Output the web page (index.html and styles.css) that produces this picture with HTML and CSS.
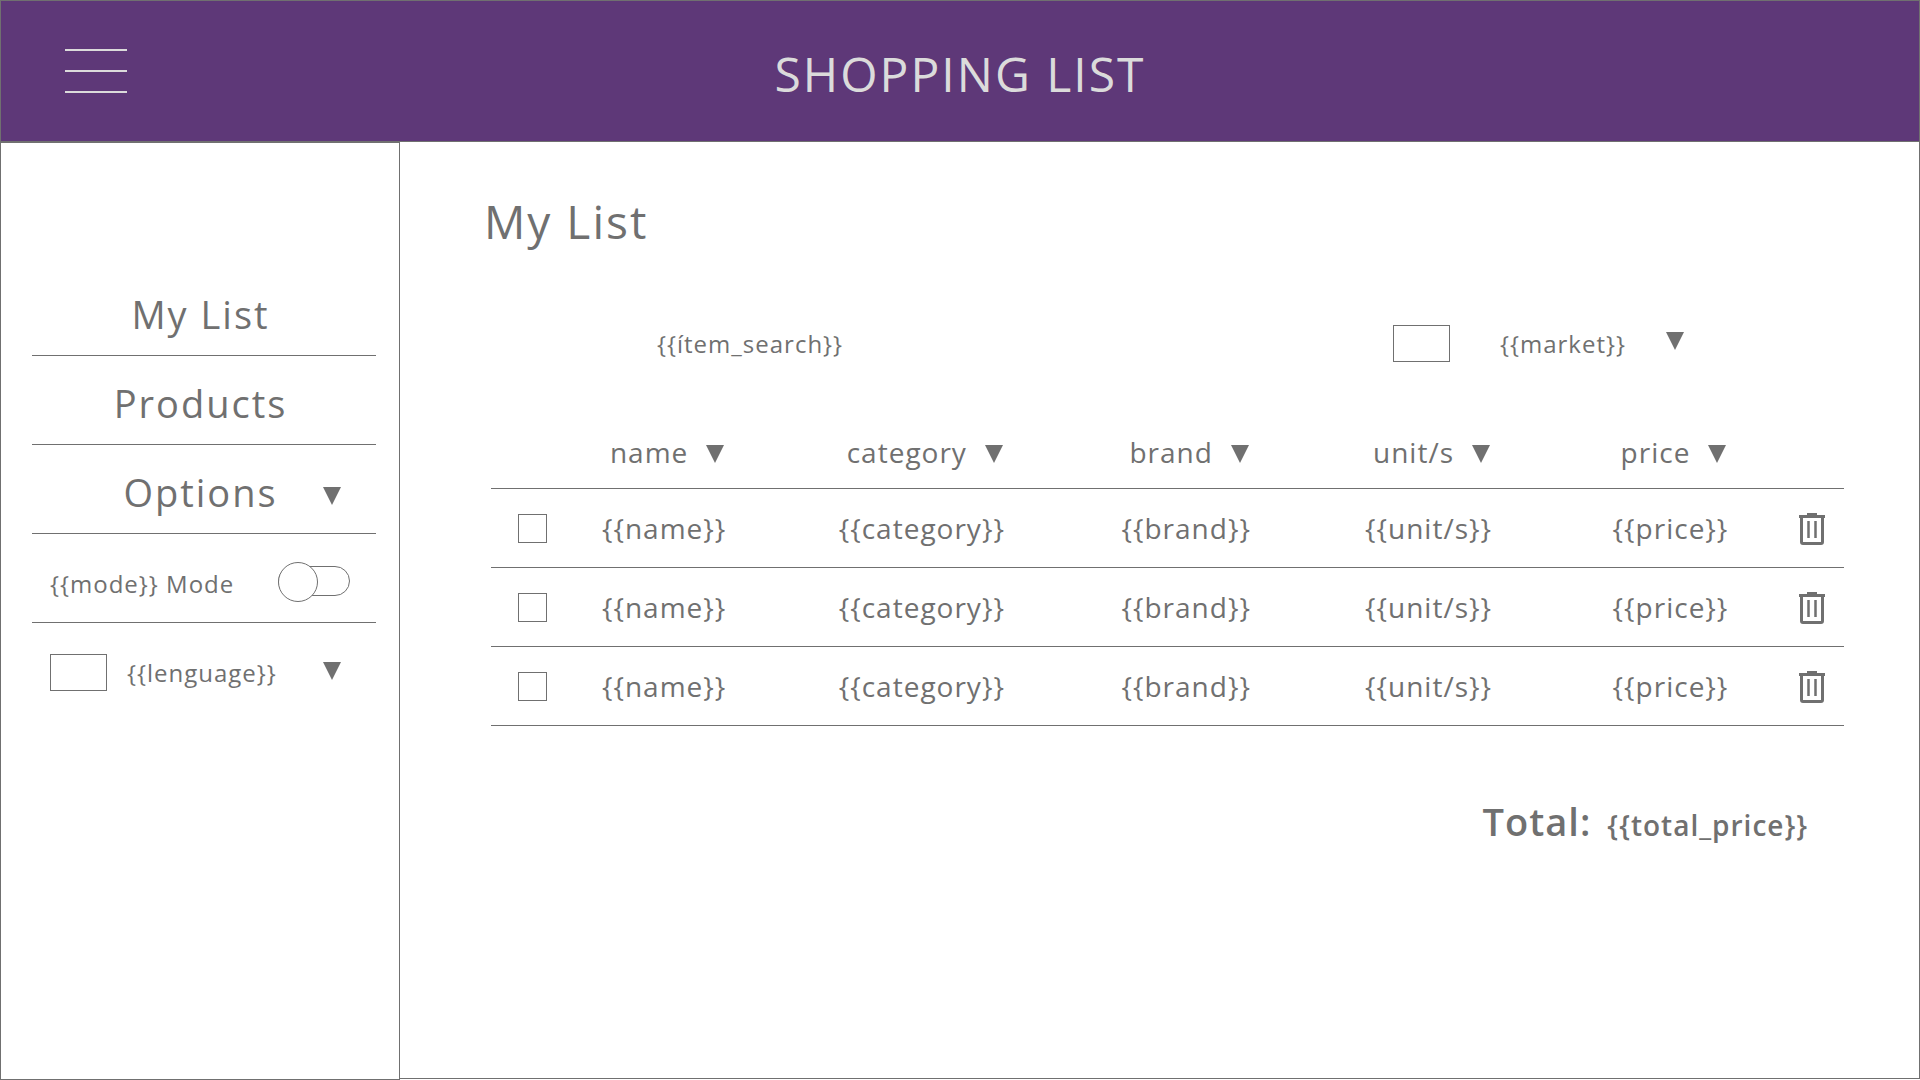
FILE: index.html
```html
<!DOCTYPE html>
<html lang="en">
<head>
  <meta charset="utf-8">
  <meta name="viewport" content="width=device-width, initial-scale=1">
  <title>Shopping List</title>
  <link rel="stylesheet" href="styles.css">
</head>
<body>
  <svg class="sprite" aria-hidden="true">
    <symbol id="arrow" viewBox="0 0 18 18"><path d="M0 0H18L9 18Z" fill="currentColor"/></symbol>
    <symbol id="trash" viewBox="0 0 28 32">
      <path d="M9 1.5H19" stroke="currentColor" stroke-width="3"/>
      <path d="M1 3.5H27" stroke="currentColor" stroke-width="3"/>
      <path d="M3.500 4V29Q3.500 30.500 5 30.500H23Q24.500 30.500 24.500 29V4" fill="none" stroke="currentColor" stroke-width="3"/>
      <path d="M10.500 8V25M17.500 8V25" stroke="currentColor" stroke-width="2.500"/>
    </symbol>
  </svg>
  <header class="topbar">
    <button class="menu-button" type="button" aria-label="Menu">
      <span class="menu-line"></span>
      <span class="menu-line"></span>
      <span class="menu-line"></span>
    </button>
    <h1 class="brand">SHOPPING LIST</h1>
  </header>
  <div class="layout">
    <nav class="sidebar">
      <ul class="menu">
        <li class="menu-item"><a class="menu-link" href="#list">My List</a></li>
        <li class="menu-item"><a class="menu-link" href="#products">Products</a></li>
        <li class="menu-item">
          <button class="menu-link" type="button"><span class="menu-label">Options</span><svg class="arrow"><use href="#arrow"/></svg></button>
        </li>
        <li class="menu-item option">
          <label for="mode">{{mode}} Mode</label>
          <input class="toggle" id="mode" type="checkbox">
        </li>
        <li class="menu-item option">
          <span class="flag"></span>
          <select class="picker" aria-label="Language"><option>{{lenguage}}</option></select>
          <svg class="arrow"><use href="#arrow"/></svg>
        </li>
      </ul>
    </nav>
    <main class="content" id="list">
      <h2 class="heading">My List</h2>
      <div class="filters">
        <input class="search" type="text" aria-label="Search" value="{{ítem_search}}">
        <div class="market">
          <span class="flag"></span>
          <select class="picker" aria-label="Market"><option>{{market}}</option></select>
          <svg class="arrow"><use href="#arrow"/></svg>
        </div>
      </div>
      <table class="items">
        <colgroup>
          <col class="col-check"><col class="col-name"><col class="col-category"><col class="col-brand"><col class="col-units"><col class="col-price"><col>
        </colgroup>
        <thead>
          <tr>
            <th></th>
            <th><button class="sort" type="button">name<svg class="arrow"><use href="#arrow"/></svg></button></th>
            <th><button class="sort" type="button">category<svg class="arrow"><use href="#arrow"/></svg></button></th>
            <th><button class="sort" type="button">brand<svg class="arrow"><use href="#arrow"/></svg></button></th>
            <th><button class="sort" type="button">unit/s<svg class="arrow"><use href="#arrow"/></svg></button></th>
            <th><button class="sort" type="button">price<svg class="arrow"><use href="#arrow"/></svg></button></th>
            <th></th>
          </tr>
        </thead>
        <tbody>
          <tr>
            <td><input class="tick" type="checkbox" aria-label="Select item 1"></td>
            <td>{{name}}</td><td>{{category}}</td><td>{{brand}}</td><td>{{unit/s}}</td><td>{{price}}</td>
            <td><button class="delete" type="button" aria-label="Delete item 1"><svg class="trash"><use href="#trash"/></svg></button></td>
          </tr>
          <tr>
            <td><input class="tick" type="checkbox" aria-label="Select item 2"></td>
            <td>{{name}}</td><td>{{category}}</td><td>{{brand}}</td><td>{{unit/s}}</td><td>{{price}}</td>
            <td><button class="delete" type="button" aria-label="Delete item 2"><svg class="trash"><use href="#trash"/></svg></button></td>
          </tr>
          <tr>
            <td><input class="tick" type="checkbox" aria-label="Select item 3"></td>
            <td>{{name}}</td><td>{{category}}</td><td>{{brand}}</td><td>{{unit/s}}</td><td>{{price}}</td>
            <td><button class="delete" type="button" aria-label="Delete item 3"><svg class="trash"><use href="#trash"/></svg></button></td>
          </tr>
        </tbody>
      </table>
      <p class="total"><span class="total-label">Total:</span><span>{{total_price}}</span></p>
    </main>
  </div>
</body>
</html>
```
FILE: styles.css
```css
* {
  box-sizing: border-box;
}

body {
  display: flex;
  flex-direction: column;
  min-height: 100vh;
  margin: 0;
  color: #707070;
  background: #fff;
  font-family: "Open Sans", "Noto Sans", sans-serif;
  font-size: 28px;
  letter-spacing: 1px;
}

button,
input,
select {
  margin: 0;
  padding: 0;
  border: 0;
  border-radius: 0;
  background: none;
  color: inherit;
  font: inherit;
  letter-spacing: inherit;
  appearance: none;
}

.sprite {
  display: none;
}

.arrow {
  flex: none;
  width: 18px;
  height: 18px;
}

.topbar {
  display: grid;
  grid-template-columns: 1fr auto 1fr;
  align-items: center;
  height: 142px;
  padding: 0 64px;
  border: 1px solid #707070;
  background: #5e3878;
  color: #dbdbdb;
}

.menu-button {
  display: flex;
  flex-direction: column;
  gap: 19px;
  width: 62px;
}

.menu-line {
  height: 2px;
  background: #dbdbdb;
}

.brand {
  margin: 0;
  padding-top: 6px;
  font-size: 48px;
  font-weight: 400;
  line-height: 64px;
  letter-spacing: 2px;
}

.layout {
  display: flex;
  flex: 1;
}

.sidebar {
  flex: none;
  width: 400px;
  padding: 124px 23px 0 31px;
  border: 1px solid #707070;
}

.menu {
  margin: 0;
  padding: 0;
  list-style: none;
}

.menu-item {
  height: 89px;
  border-bottom: 1px solid #707070;
}

.menu-item:last-child {
  border-bottom: 0;
}

.menu-link {
  display: grid;
  grid-template-columns: 1fr auto 1fr;
  align-items: center;
  width: 100%;
  height: 100%;
  padding: 6px 35px 0 28px;
  color: inherit;
  font-size: 38px;
  letter-spacing: 2px;
  text-decoration: none;
}

a.menu-link {
  display: flex;
  justify-content: center;
}

.menu-label {
  grid-column: 2;
}

.menu-link .arrow {
  justify-self: end;
  margin-top: 8px;
}

.option {
  display: flex;
  align-items: center;
  padding: 10px 35px 0 18px;
  font-size: 24px;
}

.toggle {
  position: relative;
  width: 72px;
  height: 30px;
  margin: 0 -9px 4px auto;
  border: 1px solid #707070;
  border-radius: 15px;
}

.toggle::before {
  content: "";
  position: absolute;
  top: -5px;
  left: -1px;
  width: 38px;
  height: 38px;
  border: 1px solid #707070;
  border-radius: 50%;
  background: #fff;
}

.flag {
  flex: none;
  width: 57px;
  height: 37px;
  margin-right: 20px;
  border: 1px solid #707070;
}

.picker {
  flex: 1;
  min-width: 0;
}

.picker + .arrow {
  margin-bottom: 4px;
}

.content {
  flex: 1;
  min-width: 0;
  padding: 47px 75px 48px 91px;
  border-right: 1px solid #707070;
  border-bottom: 1px solid #707070;
  margin-bottom: 1px;
}

.heading {
  margin: 0 -7px;
  font-size: 46px;
  font-weight: 400;
  line-height: 64px;
  letter-spacing: 2px;
}

.filters {
  display: flex;
  justify-content: space-between;
  align-items: center;
  height: 40px;
  margin-top: 70px;
  padding: 0 160px 0 166px;
  font-size: 24px;
}

.search {
  width: 400px;
}

.market {
  display: flex;
  align-items: center;
  width: 291px;
}

.market .flag {
  margin-right: 50px;
}

.items {
  width: 100%;
  margin-top: 54px;
  border-collapse: collapse;
  table-layout: fixed;
}

.items tr {
  height: 79px;
  border-bottom: 1px solid #707070;
}

.items thead tr {
  height: 71px;
}

.items th,
.items td {
  padding: 0;
  font-weight: 400;
  text-align: left;
  white-space: nowrap;
}

.items td:first-child,
.items td:last-child {
  padding-top: 2px;
}

.col-check { width: 8.2%; }
.col-name { width: 17.5%; }
.col-category { width: 20.9%; }
.col-brand { width: 18%; }
.col-units { width: 18.3%; }
.col-price { width: 13.7%; }

.sort {
  display: flex;
  align-items: center;
  gap: 18px;
  padding-left: 8px;
}

.sort .arrow {
  margin-top: 4px;
}

.tick {
  display: block;
  width: 29px;
  height: 29px;
  margin-left: 27px;
  border: 1px solid #707070;
}

.delete,
.trash {
  display: block;
  width: 28px;
  height: 32px;
}

.total {
  display: flex;
  justify-content: flex-end;
  align-items: baseline;
  gap: 16px;
  margin: 69px 36px 0 0;
  font-weight: 600;
}

.total-label {
  font-size: 38px;
}
```
